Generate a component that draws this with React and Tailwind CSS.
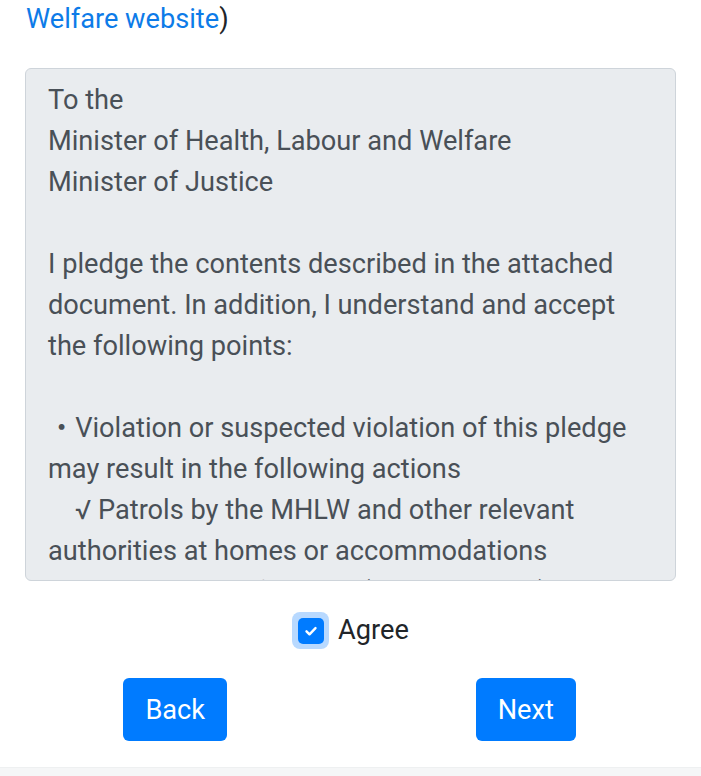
import React from 'react';

const lines = [
  { text: 'To the' },
  { text: 'Minister of Health, Labour and Welfare' },
  { text: 'Minister of Justice' },
  { text: '' },
  { text: 'I pledge the contents described in the attached' },
  { text: 'document. In addition, I understand and accept' },
  { text: 'the following points:' },
  { text: '' },
  { text: '・Violation or suspected violation of this pledge' },
  { text: 'may result in the following actions' },
  { text: '√ Patrols by the MHLW and other relevant', indent: true },
  { text: 'authorities at homes or accommodations' },
  { text: '√ Publication of names (nationals only), and', indent: true },
  { text: 'nationality of foreign nationals' },
];

const App = () => {
  return (
    <div
      className="w-[701px] h-[776px] bg-white flex flex-col overflow-hidden"
      style={{ fontFamily: 'Roboto, "Noto Sans CJK JP", sans-serif' }}
    >
      <div className="px-[26px] mt-[1px] text-[27.2px] leading-[36px] text-[#212529]">
        <span className="text-[#0d7be8]">Welfare website</span>)
      </div>

      <div className="mx-[25px] mt-[31px] h-[513px] rounded-[6px] border border-[#ced4da] bg-[#e9ecef] overflow-hidden px-[22px] pt-[11px]">
        {lines.map((l, i) => (
          <div key={i} className={`whitespace-nowrap text-[27.2px] leading-[41px] text-[#495057] h-[41px] ${l.indent ? 'pl-[27px]' : ''}`}>
            {l.text}
          </div>
        ))}
      </div>

      <div className="mt-[31px] h-[37px] flex items-center justify-center gap-[9px]">
        <div className="w-[37px] h-[37px] shrink-0 rounded-[8px] bg-[#b8d9ff] flex items-center justify-center">
          <div className="w-[26px] h-[26px] rounded-[5px] bg-[#007bff] flex items-center justify-center">
            <svg width="14" height="14" viewBox="0 0 14 14" fill="none">
              <path d="M2.5 7.3l3 3 6-6.2" stroke="white" strokeWidth="2.4" strokeLinecap="round" strokeLinejoin="round" />
            </svg>
          </div>
        </div>
        <span className="text-[27.2px] leading-[37px] text-[#212529]">Agree</span>
      </div>

      <div className="mt-[29px] grid grid-cols-2">
        <div className="flex justify-center">
          <button className="h-[63px] px-[22px] rounded-[6px] bg-[#007bff] text-white text-[27.2px] leading-[36px]">Back</button>
        </div>
        <div className="flex justify-center">
          <button className="h-[63px] px-[22px] rounded-[6px] bg-[#007bff] text-white text-[27.2px] leading-[36px]">Next</button>
        </div>
      </div>

      <div className="flex-1" />
      <div className="h-[9px] bg-[#f5f6f7] border-t border-[#eef0f1]" />
    </div>
  );
};

export default App;
